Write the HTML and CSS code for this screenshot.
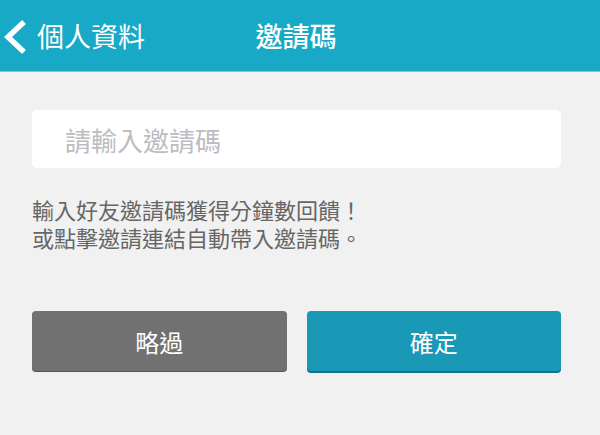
FILE: index.html
```html
<!DOCTYPE html>
<html lang="zh-Hant">
<head>
  <meta charset="UTF-8" />
  <meta name="viewport" content="width=device-width, initial-scale=1" />
  <title>邀請碼</title>
  <link rel="stylesheet" href="styles.css">
</head>
<body>
  <div class="top-bar">
    <a class="back-link" href="#">
      <svg class="back-icon" width="32" height="36" viewBox="0 0 32 36">
        <polyline points="26,3 10,18 26,33" fill="none" stroke="#fff" stroke-width="5.5" stroke-linecap="butt" />
      </svg>
      <span>個人資料</span>
    </a>
    <h1>邀請碼</h1>
  </div>

  <div class="content">
    <input type="text" class="code-input" placeholder="請輸入邀請碼" />

    <p class="hint">
      <span>輸入好友邀請碼獲得分鐘數回饋！</span>
      <span>或點擊邀請連結自動帶入邀請碼。</span>
    </p>

    <div class="actions">
      <button class="btn btn-skip">略過</button>
      <button class="btn btn-ok">確定</button>
    </div>
  </div>
</body>
</html>
```

FILE: styles.css
```css
* {
  margin: 0;
  padding: 0;
  box-sizing: border-box;
  font-family: 'Noto Sans CJK TC', 'Noto Sans', sans-serif;
}

body {
  width: 600px;
  height: 435px;
  background: #f1f1f1;
  overflow: hidden;
}

.top-bar {
  position: relative;
  height: 72px;
  background: #17a9c6;
  border-bottom: 1px solid #9fb8be;
  display: flex;
  align-items: center;
  color: white;
}

.back-link {
  display: flex;
  align-items: center;
  gap: 7px;
  margin-left: -2px;
  color: white;
  text-decoration: none;
  font-size: 27px;
  line-height: 1;
}

.back-icon {
  display: block;
  margin-top: 2px;
}

.top-bar h1 {
  position: absolute;
  left: 0;
  right: 8px;
  top: 0;
  bottom: 0;
  display: flex;
  align-items: center;
  justify-content: center;
  font-size: 27px;
  font-weight: 500;
  pointer-events: none;
}

.content {
  padding: 38px 39px 0 32px;
}

.code-input {
  display: block;
  width: 100%;
  height: 58px;
  border: none;
  border-radius: 5px;
  background: white;
  padding: 0 33px;
  font-size: 26px;
  color: #444;
  outline: none;
}

.code-input::placeholder {
  color: #bcbcc2;
}

.hint {
  margin-top: 27px;
  font-size: 22px;
  line-height: 28px;
  color: #666;
}

.hint span {
  display: block;
}

.actions {
  display: flex;
  gap: 20px;
  margin-top: 60px;
}

.btn {
  flex: 1;
  height: 60px;
  border: none;
  border-radius: 4px;
  color: white;
  font-size: 24px;
  cursor: pointer;
}

.btn-skip {
  background: #717171;
  box-shadow: 0 1px 0 #555;
}

.btn-ok {
  background: #1a99b7;
  box-shadow: 0 2px 0 #11718a;
}
```
